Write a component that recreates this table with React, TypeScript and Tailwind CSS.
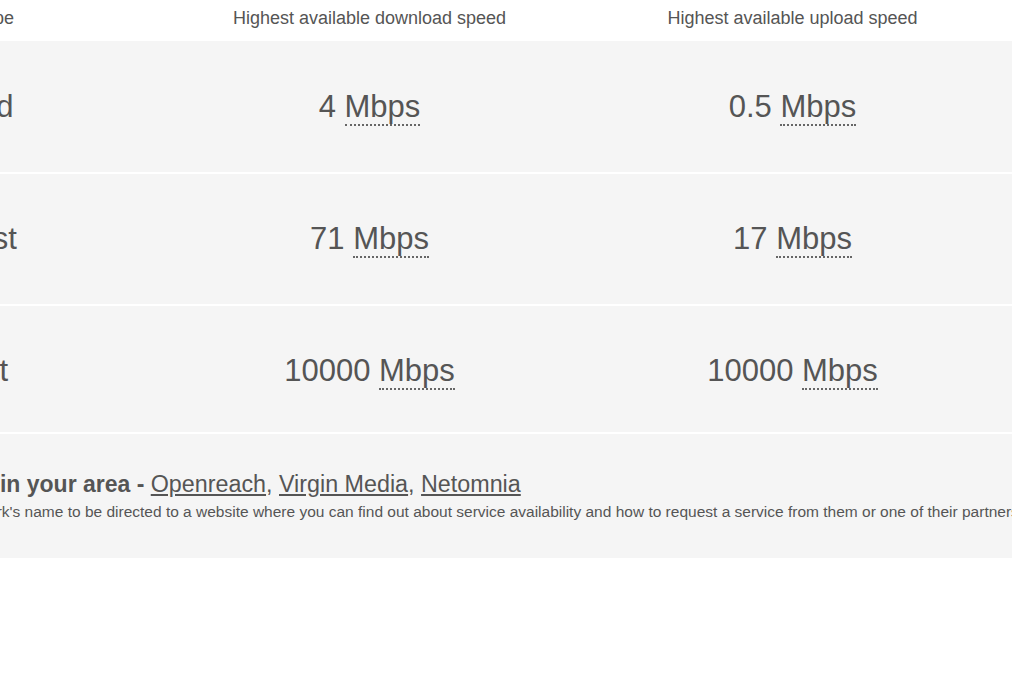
import React from "react";

const rows = [
  { label: "Standard", down: "4", up: "0.5", h: "h-[133px]" },
  { label: "Superfast", down: "71", up: "17", h: "h-[132px]" },
  { label: "Ultrafast", down: "10000", up: "10000", h: "h-[128px]", pt: "pt-[3px]" },
];

function Speed({ n }: { n: string }) {
  return (
    <span>
      {n}{" "}
      <abbr title="Megabits per second" className="no-underline border-b-2 border-dotted border-[#666]">
        Mbps
      </abbr>
    </span>
  );
}

export default function App() {
  return (
    <div className="w-[1012px] h-[700px] overflow-hidden bg-white font-['Liberation_Sans',Arial,sans-serif] text-[#555]">
      <div className="ml-[-265px] w-[1500px]">
        <div className="flex h-[41px] items-center text-[18px] leading-[22px] pb-[6px]">
          <div className="w-[423px] pl-[8px] text-center">Broadband type</div>
          <div className="w-[423px] text-center">Highest available download speed</div>
          <div className="w-[423px] text-center">Highest available upload speed</div>
        </div>
        {rows.map((r) => (
          <div key={r.label} className={`flex items-center bg-[#f5f5f5] border-b-2 border-white text-[31px] leading-[36px] ${r.h} ${r.pt ?? ""}`}>
            <div className="w-[423px] pl-[8px] text-center">{r.label}</div>
            <div className="w-[423px] text-center"><Speed n={r.down} /></div>
            <div className="w-[423px] text-center"><Speed n={r.up} /></div>
          </div>
        ))}
        <div className="h-[124px] bg-[#f5f5f5] pl-[155px] pt-[37px]">
          <div className="text-[23px] leading-[26px] whitespace-nowrap">
            <span className="font-bold">Networks in your area - </span>
            <span className="text-[23.3px]">
              <a href="#" className="underline underline-offset-2 text-[#555]">Openreach</a>,{" "}
              <a href="#" className="underline underline-offset-2 text-[#555]">Virgin Media</a>,{" "}
              <a href="#" className="underline underline-offset-2 text-[#555]">Netomnia</a>
            </span>
          </div>
          <div className="mt-[6px] ml-[-20px] text-[15.5px] leading-[18px] whitespace-nowrap">
            Click on the network's name to be directed to a website where you can find out about service availability and how to request a service from them or one of their partners.
          </div>
        </div>
      </div>
    </div>
  );
}
